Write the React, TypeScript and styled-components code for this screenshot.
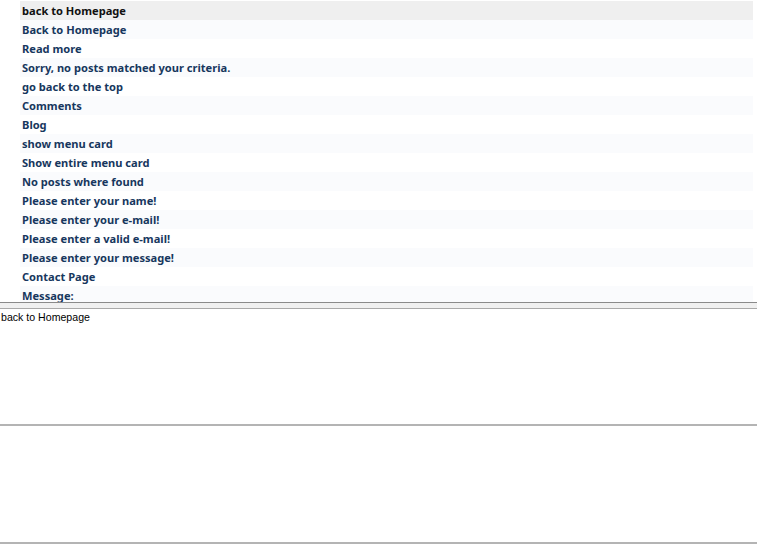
import React from "react";
import styled, { createGlobalStyle } from "styled-components";

const strings = [
  "back to Homepage",
  "Back to Homepage",
  "Read more",
  "Sorry, no posts matched your criteria.",
  "go back to the top",
  "Comments",
  "Blog",
  "show menu card",
  "Show entire menu card",
  "No posts where found",
  "Please enter your name!",
  "Please enter your e-mail!",
  "Please enter a valid e-mail!",
  "Please enter your message!",
  "Contact Page",
  "Message:",
];

const GlobalStyle = createGlobalStyle`
  html, body {
    margin: 0;
    padding: 0;
    background: #ffffff;
  }
  body {
    font-family: "Noto Sans", "DejaVu Sans", sans-serif;
  }
`;

const Window = styled.div`
  width: 757px;
  height: 544px;
  display: flex;
  flex-direction: column;
  overflow: hidden;
  background: #ffffff;
`;

const List = styled.div`
  height: 302px;
  overflow: hidden;
  padding: 1px 4px 0 20px;
  box-sizing: border-box;
`;

const Row = styled.div<{ $selected?: boolean; $alt?: boolean }>`
  height: 19px;
  line-height: 20px;
  padding-left: 2px;
  font-size: 11.1px;
  font-weight: 700;
  white-space: nowrap;
  color: ${(p) => (p.$selected ? "#111111" : "#17375e")};
  background: ${(p) =>
    p.$selected ? "#efefef" : p.$alt ? "#fafbfd" : "#ffffff"};
`;

const Splitter = styled.div`
  height: 5px;
  border-top: 1px solid #8a8a8a;
  border-bottom: 1px solid #a9a9a9;
  background: #f0f0f0;
`;

const Editor = styled.div`
  height: 117px;
  padding: 1px 1px;
  box-sizing: border-box;
  font-family: "Liberation Sans", Arial, sans-serif;
  font-size: 10.6px;
  line-height: 14px;
  color: #000000;
  border-bottom: 2px solid #b4b4b4;
`;

const Notes = styled.div`
  flex: 1;
  border-bottom: 2px solid #b4b4b4;
`;

export default function App() {
  return (
    <>
      <GlobalStyle />
      <Window>
        <List>
          {strings.map((s, i) => (
            <Row key={i} $selected={i === 0} $alt={i % 2 === 1}>
              {s}
            </Row>
          ))}
        </List>
        <Splitter />
        <Editor>back to Homepage</Editor>
        <Notes />
      </Window>
    </>
  );
}
